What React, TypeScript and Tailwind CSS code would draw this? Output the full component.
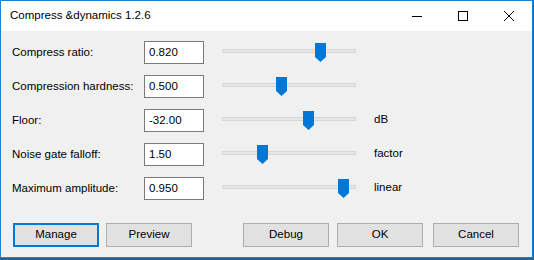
const rows = [
  { label: "Compress ratio:", value: "0.820", thumb: 93, unit: "" },
  { label: "Compression hardness:", value: "0.500", thumb: 54, unit: "" },
  { label: "Floor:", value: "-32.00", thumb: 81, unit: "dB" },
  { label: "Noise gate falloff:", value: "1.50", thumb: 35, unit: "factor" },
  { label: "Maximum amplitude:", value: "0.950", thumb: 116, unit: "linear" },
];

function Thumb({ left }: { left: number }) {
  return (
    <svg
      className="absolute top-[2px]"
      style={{ left }}
      width="11"
      height="19"
      viewBox="0 0 11 19"
    >
      <path d="M0 0 H11 V14 L5.5 19 L0 14 Z" fill="#0078d7" />
    </svg>
  );
}

function Row({ label, value, thumb, unit }: (typeof rows)[number]) {
  return (
    <div className="flex items-center h-[23px]">
      <div className="w-[132px] text-black">{label}</div>
      <div className="w-[60px] h-[23px] bg-white border border-[#7a7a7a] pl-[4px] pt-[2px] leading-[16px]">
        {value}
      </div>
      {/* slider */}
      <div className="relative ml-[18px] w-[134px] h-[23px]">
        <div className="absolute left-0 right-0 top-[8px] h-[4px] bg-[#e7e7e7] border border-[#d6d6d6]" />
        <Thumb left={thumb} />
      </div>
      <div className="ml-[18px] pb-[2px]">{unit}</div>
    </div>
  );
}

function Btn({ children, primary, className = "" }: { children: string; primary?: boolean; className?: string }) {
  return (
    <button
      className={`h-[24px] w-[86px] bg-[#e1e1e1] text-black ${
        primary ? "border-2 border-[#0078d7]" : "border border-[#adadad]"
      } ${className}`}
    >
      {children}
    </button>
  );
}

export default function App() {
  return (
    <div
      className="w-[534px] h-[260px] bg-[#2b5f8c] text-[11.5px] text-black"
      style={{ fontFamily: '"Liberation Sans", Arial, sans-serif' }}
    >
      <div className="w-[533px] h-[258px] border border-[#1883d7] bg-[#f0f0f0] flex flex-col">
        {/* title bar */}
        <div className="h-[30px] bg-white flex items-center">
          <div className="pl-[9px] flex-1">Compress &amp;dynamics 1.2.6</div>
          <div className="flex h-full">
            <div className="w-[46px] flex items-center justify-center">
              <div className="w-[10px] h-px bg-black" />
            </div>
            <div className="w-[46px] flex items-center justify-center">
              <div className="w-[10px] h-[10px] border border-black" />
            </div>
            <div className="w-[46px] flex items-center justify-center">
              <svg width="10" height="10" viewBox="0 0 10 10">
                <path d="M0 0 L10 10 M10 0 L0 10" stroke="#000" strokeWidth="1" />
              </svg>
            </div>
          </div>
        </div>

        {/* fields */}
        <div className="pl-[11px] pt-[10px] flex flex-col gap-[11px]">
          {rows.map((r) => (
            <Row key={r.label} {...r} />
          ))}
        </div>

        {/* buttons */}
        <div className="flex pl-[12px] mt-[23px]">
          <Btn primary>Manage</Btn>
          <Btn className="ml-[7px]">Preview</Btn>
          <Btn className="ml-[51px]">Debug</Btn>
          <Btn className="ml-[8px]">OK</Btn>
          <Btn className="ml-[10px]">Cancel</Btn>
        </div>
      </div>
    </div>
  );
}
